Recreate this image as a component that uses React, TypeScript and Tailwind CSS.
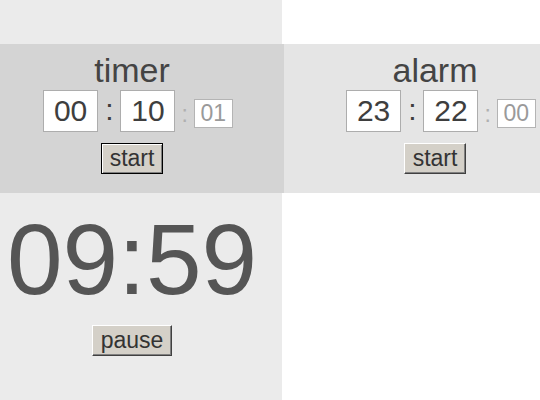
import React from 'react'

const font = "font-['Liberation_Sans',Arial,sans-serif]"

function Box({ value, small }: { value: string; small?: boolean }) {
  if (small) {
    return (
      <div className="w-[39px] h-[29px] border border-[#b4b4b4] bg-white text-[23px] leading-[27px] text-[#9a9a9a] text-center">
        {value}
      </div>
    )
  }
  return (
    <div className="w-[55px] h-[42px] border border-[#adadad] bg-white text-[30px] leading-[40px] text-[#3e3e3e] text-center">
      {value}
    </div>
  )
}

function Button({ label, focused }: { label: string; focused?: boolean }) {
  return (
    <button
      className={
        'bg-[#d4d0c8] text-[#333] text-[23px] leading-[27px] px-[8px] py-px ' +
        (focused
          ? 'border border-black shadow-[inset_1px_1px_0_#fff,inset_-1px_-1px_0_#808080]'
          : 'border border-t-white border-l-white border-r-[#404040] border-b-[#404040] shadow-[inset_-1px_-1px_0_#808080]')
      }
    >
      {label}
    </button>
  )
}

function Panel({ title, h, m, s, focused }: { title: string; h: string; m: string; s: string; focused?: boolean }) {
  return (
    <div className="flex flex-col items-center pt-[8px]">
      <div className="text-[34px] leading-[36px] text-[#444]">{title}</div>
      <div className="flex items-end mt-[2px] ml-[12px]">
        <Box value={h} />
        <span className="text-[30px] leading-[40px] text-[#3e3e3e] mx-[7px] mb-[2px]">:</span>
        <Box value={m} />
        <span className="text-[23px] leading-[27px] text-[#b0b0b0] mx-[6px] mb-[4px]">:</span>
        <div className="mb-[4px]">
          <Box value={s} small />
        </div>
      </div>
      <div className="mt-[11px]">
        <Button label="start" focused={focused} />
      </div>
    </div>
  )
}

export default function App() {
  return (
    <div className={'w-[540px] h-[400px] flex flex-col overflow-hidden bg-white ' + font}>
      <div className="h-[44px] flex">
        <div className="w-[282px] bg-[#ebebeb]" />
        <div className="flex-1 bg-white" />
      </div>
      <div className="h-[149px] flex">
        <div className="w-[284px] bg-[#d4d4d4] pr-[20px]">
          <Panel title="timer" h="00" m="10" s="01" focused />
        </div>
        <div className="flex-1 bg-[#e5e5e5] pl-[46px]">
          <Panel title="alarm" h="23" m="22" s="00" />
        </div>
      </div>
      <div className="flex-1 flex">
        <div className="w-[282px] bg-[#ebebeb] pr-[18px] flex flex-col items-center pt-[16px]">
          <div className="text-[100px] leading-[100px] text-[#555]">09:59</div>
          <div className="mt-[16px]">
            <Button label="pause" />
          </div>
        </div>
        <div className="flex-1 bg-white" />
      </div>
    </div>
  )
}
